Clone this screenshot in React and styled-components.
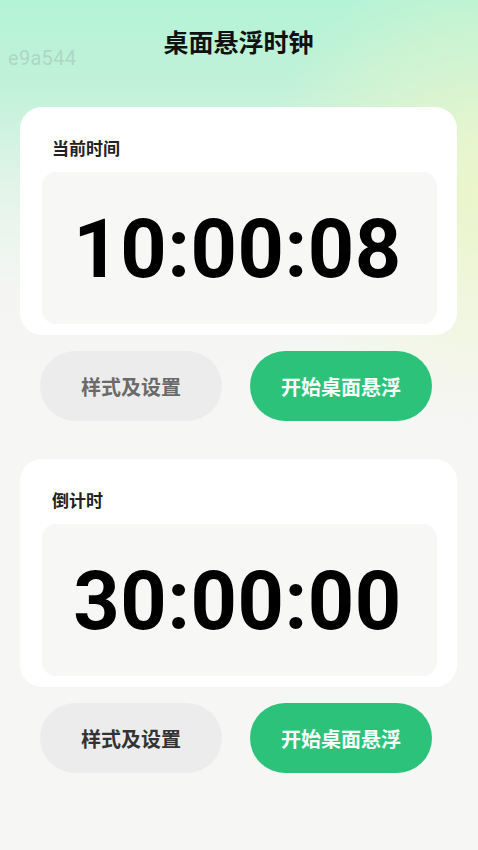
import React from "react";
import styled, { createGlobalStyle } from "styled-components";

const Global = createGlobalStyle`
  html, body { margin: 0; padding: 0; }
  body {
    background: #f6f6f5;
    font-family: "Noto Sans", "Noto Sans CJK SC", sans-serif;
  }
`;

const Page = styled.div`
  position: relative;
  width: 478px;
  min-height: 850px;
  box-sizing: border-box;
  padding: 0 21px 0 20px;
  background:
    radial-gradient(ellipse 230px 240px at 490px 190px, rgba(236, 246, 200, 0.95), rgba(236, 246, 200, 0) 100%),
    linear-gradient(180deg, rgba(180, 243, 214, 1) 0px, rgba(188, 241, 214, 0.9) 90px, rgba(215, 243, 226, 0.6) 190px, rgba(240, 245, 238, 0.25) 290px, rgba(246, 246, 245, 0) 380px),
    #f6f6f5;
  display: flex;
  flex-direction: column;
`;

const Watermark = styled.div`
  position: absolute;
  left: 8px;
  top: 46px;
  font-family: "Roboto", "Liberation Sans", sans-serif;
  font-size: 20px;
  color: rgba(150, 170, 160, 0.4);
  letter-spacing: 0.3px;
`;

const Title = styled.h1`
  margin: 0;
  height: 84px;
  padding-top: 28px;
  box-sizing: border-box;
  text-align: center;
  font-size: 25px;
  line-height: 28px;
  font-weight: 700;
  color: #111;
`;

const Section = styled.section`
  display: flex;
  flex-direction: column;
  margin-top: ${(p) => p.$top}px;
`;

const Card = styled.div`
  background: #fff;
  border-radius: 22px;
  padding: 31px 20px 11px 22px;
  display: flex;
  flex-direction: column;
`;

const Label = styled.div`
  font-size: 17px;
  line-height: 22px;
  font-weight: 700;
  color: #222;
  margin-left: 10px;
  margin-bottom: 12px;
`;

const Display = styled.div`
  height: 152px;
  background: #f7f7f6;
  border-radius: 14px;
  display: flex;
  align-items: center;
  justify-content: center;
`;

const Time = styled.div`
  font-family: "Roboto", "Liberation Sans", sans-serif;
  font-weight: 700;
  font-size: 81px;
  line-height: 1;
  color: #000;
  letter-spacing: 0.5px;
  margin-left: -4px;
  margin-top: 2px;
`;

const Buttons = styled.div`
  display: flex;
  gap: 28px;
  padding-left: 20px;
  margin-top: 16px;
`;

const Button = styled.button`
  width: 182px;
  height: 70px;
  border: none;
  border-radius: 35px;
  font-family: "Noto Sans", "Noto Sans CJK SC", sans-serif;
  font-size: 20px;
  font-weight: 700;
  display: flex;
  align-items: center;
  justify-content: center;
  background: ${(p) => (p.$primary ? "#2cc279" : "#ececec")};
  color: ${(p) => (p.$primary ? "#fff" : p.$muted ? "#6a6a6a" : "#333")};
`;

const sections = [
  { label: "当前时间", time: "10:00:08", top: 23, muted: true },
  { label: "倒计时", time: "30:00:00", top: 38, muted: false },
];

export default function App() {
  return (
    <>
      <Global />
      <Page>
        <Watermark>e9a544</Watermark>
        <Title>桌面悬浮时钟</Title>
        {sections.map((s) => (
          <Section key={s.label} $top={s.top}>
            <Card>
              <Label>{s.label}</Label>
              <Display>
                <Time>{s.time}</Time>
              </Display>
            </Card>
            <Buttons>
              <Button $muted={s.muted}>样式及设置</Button>
              <Button $primary>开始桌面悬浮</Button>
            </Buttons>
          </Section>
        ))}
      </Page>
    </>
  );
}
